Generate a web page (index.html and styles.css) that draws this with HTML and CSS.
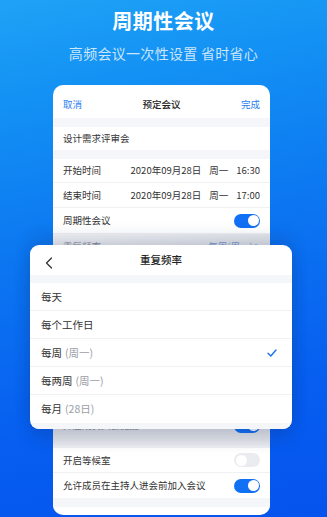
FILE: index.html
```html
<!DOCTYPE html>
<html lang="zh">
<head>
<meta charset="utf-8">
<title>周期性会议</title>
<link rel="stylesheet" href="styles.css">
</head>
<body>
<div class="page">
  <header class="hero">
    <h1 class="hero-title">周期性会议</h1>
    <p class="hero-sub">高频会议一次性设置 省时省心</p>
  </header>

  <section class="card">
    <div class="card-head">
      <span class="link">取消</span>
      <span class="head-title">预定会议</span>
      <span class="link">完成</span>
    </div>
    <div class="band"></div>
    <div class="row row-23">设计需求评审会</div>
    <div class="band"></div>
    <div class="row row-24 line"><span>开始时间</span><span class="date">2020年09月28日<i>周一</i><i>16:30</i></span></div>
    <div class="row row-25 line"><span>结束时间</span><span class="date">2020年09月28日<i>周一</i><i>17:00</i></span></div>
    <div class="row row-26 line"><span>周期性会议</span><span class="toggle on"></span></div>
    <div class="row row-25 line shade-top"><span class="muted">重复频率</span><span class="muted-blue">每周(周一) &gt;</span></div>
    <div class="row row-25"></div>
    <div class="band"></div>
    <div class="row row-24 line"></div>
    <div class="row row-24 line"></div>
    <div class="row row-24 line"></div>
    <div class="row row-24 line"></div>
    <div class="row row-24 line"></div>
    <div class="row row-25 shade"><span class="muted">开启成员入会提醒</span><span class="toggle on"></span></div>
    <div class="band band-shade"></div>
    <div class="row row-25 line"><span>开启等候室</span><span class="toggle"></span></div>
    <div class="row row-25"><span>允许成员在主持人进会前加入会议</span><span class="toggle on"></span></div>
    <div class="band"></div>
  </section>

  <section class="sheet">
    <div class="sheet-head">
      <svg class="back" width="8" height="12" viewBox="0 0 8 12"><path d="M6.5 1 L1.5 6 L6.5 11" fill="none" stroke="#333" stroke-width="1.3" stroke-linecap="round" stroke-linejoin="round"/></svg>
      <span class="sheet-title">重复频率</span>
    </div>
    <div class="band"></div>
    <div class="opt"><span class="opt-label">每天</span></div>
    <div class="opt"><span class="opt-label">每个工作日</span></div>
    <div class="opt"><span class="opt-label">每周<em>(周一)</em></span>
      <svg class="check" width="10" height="8" viewBox="0 0 10 8"><path d="M1 4.2 L3.8 7 L9 1" fill="none" stroke="#1a73f0" stroke-width="1.4" stroke-linecap="round" stroke-linejoin="round"/></svg>
    </div>
    <div class="opt"><span class="opt-label">每两周<em>(周一)</em></span></div>
    <div class="opt last"><span class="opt-label">每月<em>(28日)</em></span></div>
    <div class="band band-bottom"></div>
  </section>
</div>
</body>
</html>
```

FILE: styles.css
```css
* { box-sizing: border-box; margin: 0; padding: 0; }
html, body { width: 327px; height: 517px; overflow: hidden; }
body {
  font-family: "Noto Sans CJK SC", "Noto Sans", sans-serif;
  color: #333;
}
.page {
  position: relative;
  width: 327px;
  height: 517px;
  overflow: hidden;
  background: linear-gradient(168deg, #1fa2f6 0%, #1391f4 18%, #0c76f1 45%, #075ff0 75%, #0553ee 100%);
  display: flex;
  flex-direction: column;
  align-items: flex-start;
}
.hero {
  width: 100%;
  padding-top: 8px;
  display: flex;
  flex-direction: column;
  align-items: center;
  gap: 10px;
}
.hero-title {
  font-size: 20px;
  line-height: 26px;
  font-weight: 700;
  color: #fff;
  letter-spacing: 0.5px;
}
.hero-sub {
  font-size: 14px;
  line-height: 18px;
  color: rgba(255, 255, 255, 0.78);
  letter-spacing: 0.3px;
}
.card {
  margin-top: 23px;
  margin-left: 53px;
  width: 217px;
  height: 430px;
  background: #fff;
  border-radius: 10px;
  overflow: hidden;
  font-size: 9.5px;
  line-height: 13px;
  display: flex;
  flex-direction: column;
  flex-shrink: 0;
}
.card-head {
  height: 33px;
  padding: 5px 10px 0;
  display: flex;
  align-items: center;
  justify-content: space-between;
  flex-shrink: 0;
}
.link { color: #2a7ef2; }
.head-title { color: #222; font-weight: 500; }
.band { height: 9px; background: #f4f6f9; flex-shrink: 0; }
.row {
  padding: 0 10px;
  display: flex;
  align-items: center;
  justify-content: space-between;
  flex-shrink: 0;
  color: #333;
  white-space: nowrap;
}
.row-23 { height: 23px; }
.row-24 { height: 24px; }
.row-25 { height: 25px; }
.row-26 { height: 26px; }
.line { border-bottom: 1px solid #f0f1f4; }
.date { color: #333; }
.date i { font-style: normal; margin-left: 8px; }
.muted { color: #8a8f99; }
.muted-blue { color: #7f9ccb; }
.shade-top { background: linear-gradient(172deg, #f4f5f7 0%, #dcdfe4 100%); }
.toggle {
  position: relative;
  width: 26px;
  height: 14px;
  border-radius: 7px;
  background: #ebecef;
  flex-shrink: 0;
}
.toggle::after {
  content: "";
  position: absolute;
  top: 1.5px;
  left: 1.5px;
  width: 11px;
  height: 11px;
  border-radius: 50%;
  background: #fff;
}
.toggle.on { background: #1270f5; }
.toggle.on::after { left: 13.5px; }
.shade { background: #e4e6ea; }
.band-shade { height: 10px; background: linear-gradient(#e2e4e8, #eef0f3); }

.sheet {
  position: absolute;
  left: 30px;
  top: 245px;
  width: 262px;
  height: 184px;
  background: #fff;
  border-radius: 9px;
  overflow: hidden;
  display: flex;
  flex-direction: column;
  font-size: 10.5px;
  line-height: 14px;
  box-shadow: 0 -8px 16px rgba(20, 40, 90, 0.16), 0 10px 16px rgba(20, 40, 90, 0.18);
}
.sheet-head {
  position: relative;
  height: 30px;
  display: flex;
  align-items: center;
  justify-content: center;
  flex-shrink: 0;
}
.back { position: absolute; left: 15px; top: 12px; }
.sheet-title { font-weight: 500; color: #222; }
.sheet .band { height: 8px; }
.opt {
  height: 28px;
  padding: 0 15px 0 11px;
  display: flex;
  align-items: center;
  justify-content: space-between;
  border-bottom: 1px solid #f0f1f4;
  color: #333;
  flex-shrink: 0;
}
.opt-label { display: flex; align-items: center; gap: 3px; }
.opt.last { border-bottom: none; }
.opt em { font-style: normal; color: #9a9ea6; }
.sheet .band-bottom { height: 6px; background: #f5f6f9; }
```
